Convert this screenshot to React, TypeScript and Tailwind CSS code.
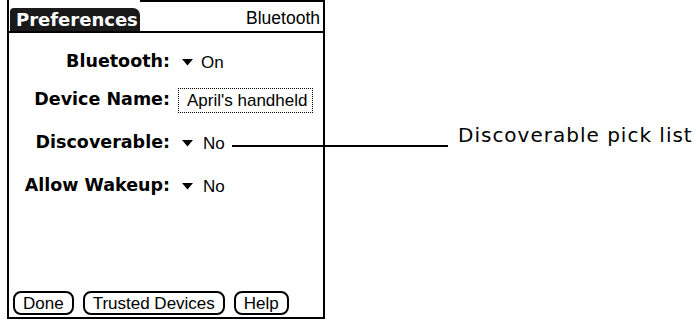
import React from 'react';

// Palm-style Bluetooth preferences screen with a callout label.

const LABEL_FONT = "font-['DejaVu_Sans',sans-serif] font-bold";
const VALUE_FONT = "font-['Liberation_Sans',sans-serif]";

function PickArrow() {
  return (
    <svg width="11" height="7" viewBox="0 0 11 7" className="mr-[8px]" aria-hidden="true">
      <polygon points="0,0 11,0 5.5,6.5" fill="#000" />
    </svg>
  );
}

function Row({ label, className, children }: { label: string; className: string; children: React.ReactNode }) {
  return (
    <div className={`flex h-[24px] items-center ${className}`}>
      <div className={`w-[161px] text-right text-[17.5px] leading-none ${LABEL_FONT}`}>{label}</div>
      <div className={`ml-[12px] flex items-center text-[17px] leading-none ${VALUE_FONT}`}>{children}</div>
    </div>
  );
}

function PalmButton({ children }: { children: React.ReactNode }) {
  return (
    <div
      className={`flex h-[24px] items-center rounded-[8px] border-2 border-black px-[8px] text-[17px] leading-none ${VALUE_FONT}`}
    >
      {children}
    </div>
  );
}

export default function App() {
  return (
    <div className="relative h-[322px] w-[696px] bg-white text-black">
      <div className="ml-[7px] flex h-[319px] w-[318px] flex-col border-x-2 border-b-2 border-black">
        {/* Title bar */}
        <div className="flex h-[33px] border-b-2 border-black">
          <div className="pl-[1px] pt-[8px]">
            <div
              className={`flex h-[23px] w-[130px] items-center rounded-tl-[4px] rounded-tr-[7px] bg-[#1a1a1a] pl-[6px] text-[18px] leading-none text-white ${LABEL_FONT}`}
            >
              Preferences
            </div>
          </div>
          <div className="flex flex-1 items-end justify-end border-t-2 border-black pb-[4px] pr-[3px]">
            <span className={`text-[17.5px] leading-none ${VALUE_FONT}`}>Bluetooth</span>
          </div>
        </div>

        {/* Form rows */}
        <Row label="Bluetooth:" className="mt-[17px]">
          <PickArrow />
          On
        </Row>
        <Row label="Device Name:" className="mt-[14px]">
          <div className="-ml-[4px] flex h-[25px] w-[135px] items-center border border-dotted border-black pl-[8px]">
            April's handheld
          </div>
        </Row>
        <Row label="Discoverable:" className="mt-[19px]">
          <PickArrow />
          <span className="ml-[2px]">No</span>
        </Row>
        <Row label="Allow Wakeup:" className="mt-[19px]">
          <PickArrow />
          <span className="ml-[2px]">No</span>
        </Row>

        {/* Buttons */}
        <div className="mt-auto mb-[2px] flex gap-[9px] pl-[4px]">
          <PalmButton>Done</PalmButton>
          <PalmButton>Trusted Devices</PalmButton>
          <PalmButton>Help</PalmButton>
        </div>
      </div>

      {/* Callout */}
      <div className="absolute left-[232px] top-[145px] h-[1.5px] w-[216px] bg-black" />
      <div className="absolute left-[458px] top-[125px] font-['DejaVu_Sans',sans-serif] text-[20px] leading-none tracking-[1px]">
        Discoverable pick list
      </div>
    </div>
  );
}
